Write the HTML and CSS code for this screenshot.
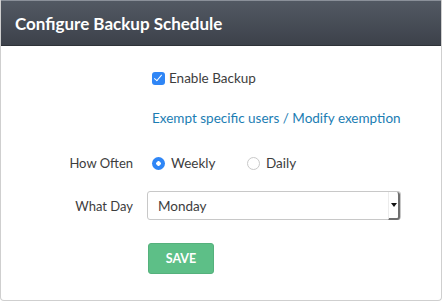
FILE: index.html
```html
<html lang="en">
  <head>
    <meta charset="UTF-8" />
    <title>Configure Backup Schedule</title>
    <link rel="stylesheet" href="styles.css">
  </head>
  <body>
    <div class="panel">
      <div class="panel-header">Configure Backup Schedule</div>
      <div class="panel-body">
        <div class="row row-enable">
          <div class="label"></div>
          <label class="check-line">
            <input type="checkbox" class="check" checked />
            <span>Enable Backup</span>
          </label>
        </div>

        <div class="row row-exempt">
          <div class="label"></div>
          <a class="exempt-link" href="#">Exempt specific users / Modify exemption</a>
        </div>

        <div class="row row-often">
          <div class="label">How Often</div>
          <div class="radios">
            <label class="radio-item">
              <input type="radio" name="often" class="radio" checked />
              <span>Weekly</span>
            </label>
            <label class="radio-item">
              <input type="radio" name="often" class="radio" />
              <span>Daily</span>
            </label>
          </div>
        </div>

        <div class="row row-day">
          <div class="label">What Day</div>
          <div class="select">
            <span>Monday</span>
            <span class="select-arrow"></span>
          </div>
        </div>

        <div class="row row-save">
          <div class="label"></div>
          <div>
            <button class="save-btn">SAVE</button>
          </div>
        </div>
      </div>
    </div>
  </body>
</html>
```

FILE: styles.css
```css
body {
  margin: 0;
  font-family: "Lato", "Open Sans", sans-serif;
  color: #3d3d3d;
}
.panel {
  width: 442px;
  height: 301px;
  box-sizing: border-box;
  border: 1px solid #cfcfcf;
  border-top: none;
  border-radius: 0 0 4px 4px;
  overflow: hidden;
}
.panel-header {
  height: 46px;
  box-sizing: border-box;
  border-top: 1px solid #8a9099;
  border-bottom: 1px solid #2e3238;
  margin: 0 -1px;
  padding-left: 15px;
  display: flex;
  align-items: center;
  background: linear-gradient(#525963, #3c414a);
  color: #fff;
  font-size: 17px;
  font-weight: bold;
}
.panel-body {
  padding-top: 22px;
  font-size: 13.5px;
}
.row {
  display: grid;
  grid-template-columns: 132px 1fr;
  column-gap: 14px;
  align-items: center;
}
.row-enable {
  height: 20px;
}
.row-exempt {
  height: 20px;
  margin-top: 20px;
}
.row-often {
  height: 22px;
  margin-top: 24px;
}
.row-day {
  height: 29px;
  margin-top: 17px;
}
.row-save {
  margin-top: 23px;
}
.label {
  text-align: right;
  font-size: 13px;
}
.check-line {
  display: flex;
  align-items: center;
  gap: 4px;
  padding-left: 5px;
}
.check {
  appearance: none;
  margin: 0;
  width: 13px;
  height: 13px;
  border-radius: 3px;
  background: #2f86f6;
  position: relative;
}
.check::after {
  content: "";
  position: absolute;
  left: 4px;
  top: 1px;
  width: 3px;
  height: 7px;
  border: solid #fff;
  border-width: 0 1.5px 1.5px 0;
  transform: rotate(40deg);
}
.exempt-link {
  color: #1b7db3;
  text-decoration: none;
  padding-left: 5px;
}
.radios {
  display: flex;
  padding-left: 5px;
  align-items: center;
}
.radio-item {
  display: flex;
  align-items: center;
  gap: 6px;
  width: 95px;
}
.radio {
  appearance: none;
  margin: 0;
  width: 13px;
  height: 13px;
  border-radius: 50%;
  border: 1px solid #c9c9c9;
  background: #fff;
  box-sizing: border-box;
}
.radio:checked {
  border: none;
  background: radial-gradient(circle, #fff 2px, #2f86f6 2.5px);
}
.select {
  display: flex;
  align-items: center;
  justify-content: space-between;
  width: 254px;
  height: 29px;
  box-sizing: border-box;
  border: 1px solid #c8c8c8;
  border-radius: 3px;
  padding-left: 10px;
  background: #fff;
}
.select-arrow {
  width: 12px;
  height: 28px;
  box-sizing: border-box;
  border-right: 2px solid #6f6f6f;
  border-bottom: 2px solid #6f6f6f;
  border-left: 1px solid #ececec;
  border-radius: 0 3px 3px 0;
  margin-top: 1px;
  display: flex;
  align-items: center;
  justify-content: center;
}
.select-arrow::after {
  content: "";
  border-left: 3px solid transparent;
  border-right: 3px solid transparent;
  border-top: 4px solid #111;
}
.save-btn {
  margin-left: 1px;
  width: 66px;
  height: 31px;
  border: 1px solid #55b17c;
  border-radius: 3px;
  background: #5dbf87;
  color: #fff;
  font-family: inherit;
  font-size: 12.5px;
  font-weight: bold;
}
```
